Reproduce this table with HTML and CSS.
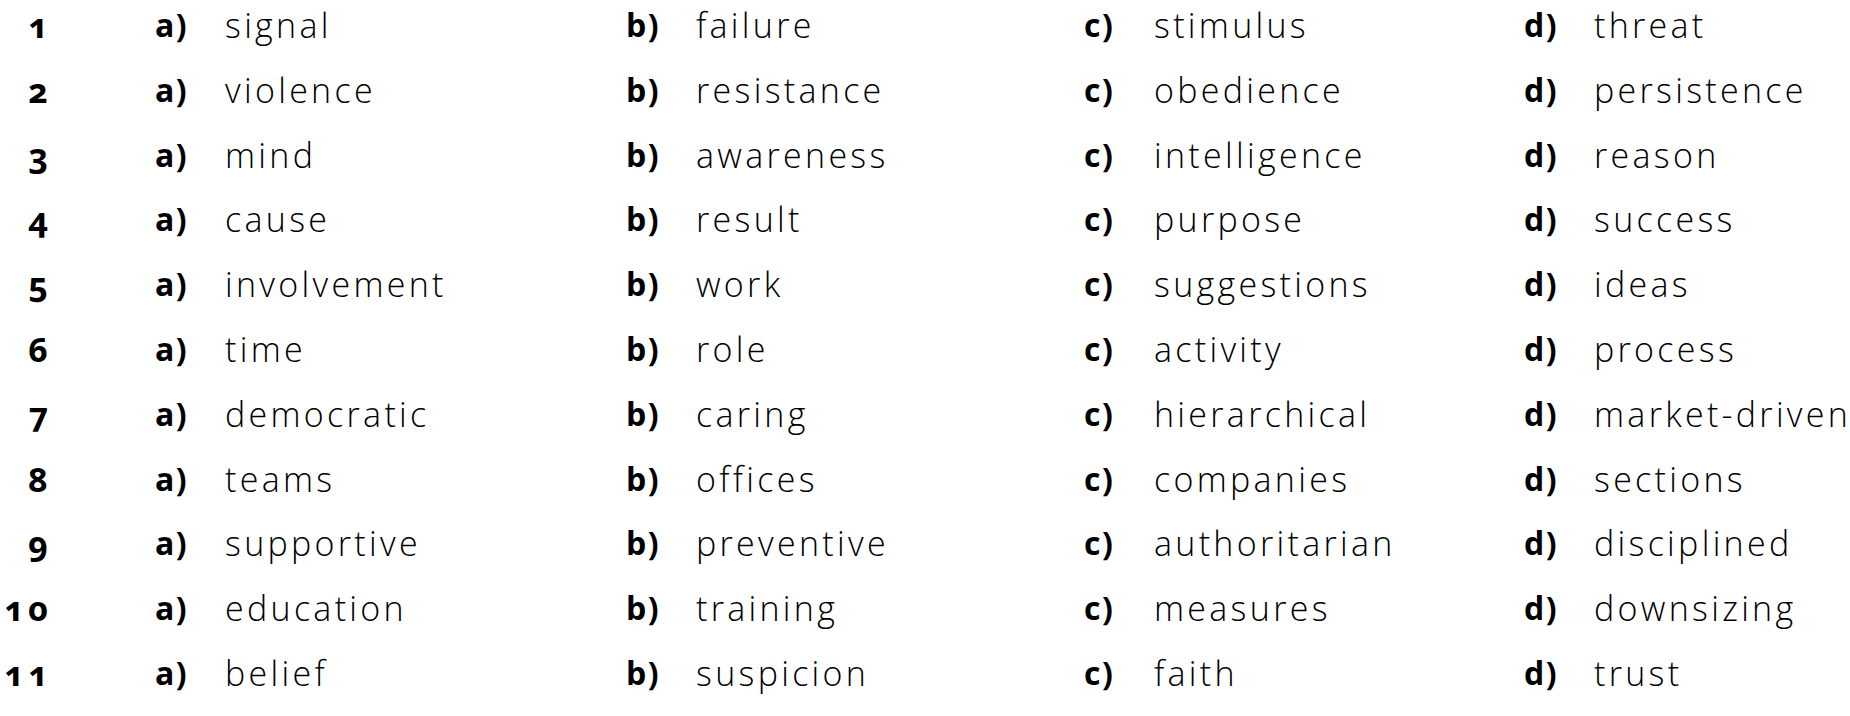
FILE: index.html
```html
<!DOCTYPE html>
<html lang="en">
<head>
<meta charset="utf-8">
<title>Vocabulary choices</title>
<link rel="stylesheet" href="styles.css">
</head>
<body>
<div class="list">
  <div class="row"><span class="num">1</span><span class="lab">a)</span><span class="word">signal</span><span class="lab">b)</span><span class="word">failure</span><span class="lab">c)</span><span class="word">stimulus</span><span class="lab">d)</span><span class="word">threat</span></div>
  <div class="row"><span class="num">2</span><span class="lab">a)</span><span class="word">violence</span><span class="lab">b)</span><span class="word">resistance</span><span class="lab">c)</span><span class="word">obedience</span><span class="lab">d)</span><span class="word">persistence</span></div>
  <div class="row"><span class="num">3</span><span class="lab">a)</span><span class="word">mind</span><span class="lab">b)</span><span class="word">awareness</span><span class="lab">c)</span><span class="word">intelligence</span><span class="lab">d)</span><span class="word">reason</span></div>
  <div class="row"><span class="num">4</span><span class="lab">a)</span><span class="word">cause</span><span class="lab">b)</span><span class="word">result</span><span class="lab">c)</span><span class="word">purpose</span><span class="lab">d)</span><span class="word">success</span></div>
  <div class="row"><span class="num">5</span><span class="lab">a)</span><span class="word">involvement</span><span class="lab">b)</span><span class="word">work</span><span class="lab">c)</span><span class="word">suggestions</span><span class="lab">d)</span><span class="word">ideas</span></div>
  <div class="row"><span class="num">6</span><span class="lab">a)</span><span class="word">time</span><span class="lab">b)</span><span class="word">role</span><span class="lab">c)</span><span class="word">activity</span><span class="lab">d)</span><span class="word">process</span></div>
  <div class="row"><span class="num">7</span><span class="lab">a)</span><span class="word">democratic</span><span class="lab">b)</span><span class="word">caring</span><span class="lab">c)</span><span class="word">hierarchical</span><span class="lab">d)</span><span class="word">market-driven</span></div>
  <div class="row"><span class="num">8</span><span class="lab">a)</span><span class="word">teams</span><span class="lab">b)</span><span class="word">offices</span><span class="lab">c)</span><span class="word">companies</span><span class="lab">d)</span><span class="word">sections</span></div>
  <div class="row"><span class="num">9</span><span class="lab">a)</span><span class="word">supportive</span><span class="lab">b)</span><span class="word">preventive</span><span class="lab">c)</span><span class="word">authoritarian</span><span class="lab">d)</span><span class="word">disciplined</span></div>
  <div class="row"><span class="num">10</span><span class="lab">a)</span><span class="word">education</span><span class="lab">b)</span><span class="word">training</span><span class="lab">c)</span><span class="word">measures</span><span class="lab">d)</span><span class="word">downsizing</span></div>
  <div class="row"><span class="num">11</span><span class="lab">a)</span><span class="word">belief</span><span class="lab">b)</span><span class="word">suspicion</span><span class="lab">c)</span><span class="word">faith</span><span class="lab">d)</span><span class="word">trust</span></div>
</div>
</body>
</html>
```
FILE: styles.css
```css
html, body {
  margin: 0;
  padding: 0;
  background: #ffffff;
}
body {
  width: 1850px;
  height: 716px;
  overflow: hidden;
  color: #000000;
  font-family: "Open Sans", "Noto Sans", sans-serif;
}
.list {
  margin-top: -7px;
}
.row {
  display: grid;
  grid-template-columns: 155px 70px 401px 70px 388px 70px 370px 70px 1fr;
  height: 64.8px;
  line-height: 64.8px;
  font-size: 34px;
  white-space: nowrap;
}
.num {
  font-family: "Noto Sans", "Open Sans", sans-serif;
  font-weight: 700;
  font-variant-numeric: oldstyle-nums;
  font-size: 34px;
  letter-spacing: 4px;
  text-align: right;
  padding-right: 103px;
}
.lab {
  font-weight: 700;
  font-size: 32px;
  letter-spacing: 1.5px;
}
.word {
  font-weight: 350;
  letter-spacing: 3.3px;
}
```
